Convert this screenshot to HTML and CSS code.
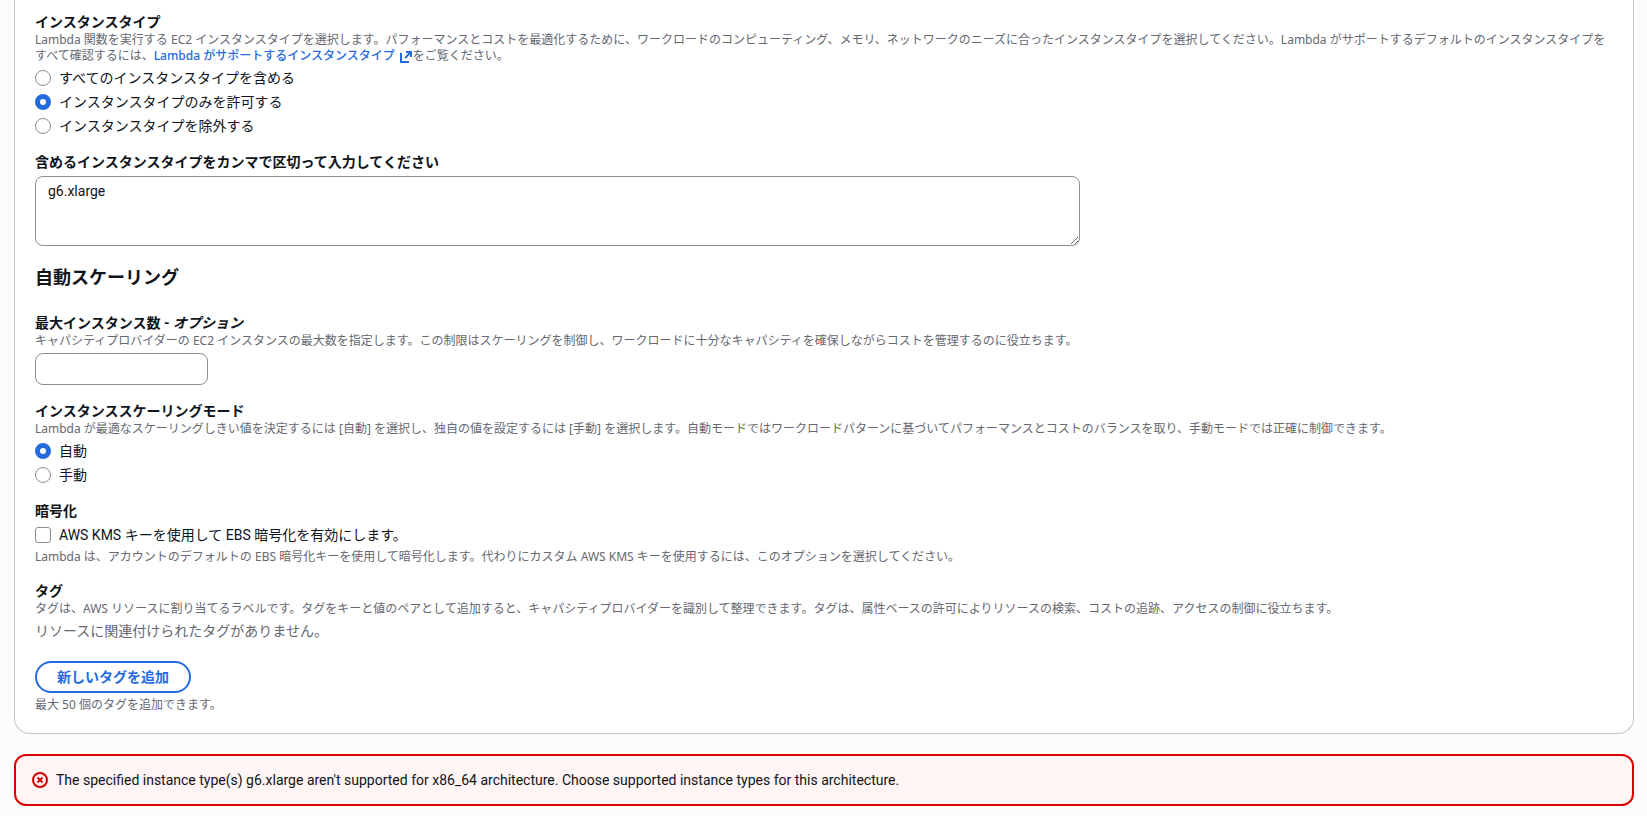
FILE: index.html
```html
<!DOCTYPE html>
<html lang="ja">
<head>
<meta charset="utf-8">
<title>キャパシティプロバイダーを作成</title>
<link rel="stylesheet" href="styles.css">
</head>
<body>
<main class="page">
  <form class="container">
    <fieldset class="field">
      <legend class="label">インスタンスタイプ</legend>
      <p class="description">Lambda 関数を実行する EC2 インスタンスタイプを選択します。パフォーマンスとコストを最適化するために、ワークロードのコンピューティング、メモリ、ネットワークのニーズに合ったインスタンスタイプを選択してください。Lambda がサポートするデフォルトのインスタンスタイプをすべて確認するには、<a class="link" href="#">Lambda がサポートするインスタンスタイプ <svg class="link-icon" viewBox="0 0 14 14" aria-hidden="true"><path d="M2 3v9h8M7 2h5v5M12 2 6 8"/></svg></a>をご覧ください。</p>
      <div class="options">
        <label class="option"><input class="radio" type="radio" name="types">すべてのインスタンスタイプを含める</label>
        <label class="option"><input class="radio" type="radio" name="types" checked>インスタンスタイプのみを許可する</label>
        <label class="option"><input class="radio" type="radio" name="types">インスタンスタイプを除外する</label>
      </div>
    </fieldset>

    <div class="field">
      <label class="label" for="included">含めるインスタンスタイプをカンマで区切って入力してください</label>
      <textarea class="textarea" id="included" rows="3">g6.xlarge</textarea>
    </div>

    <h2 class="heading">自動スケーリング</h2>

    <div class="field">
      <label class="label" for="max">最大インスタンス数 - <em>オプション</em></label>
      <p class="description">キャパシティプロバイダーの EC2 インスタンスの最大数を指定します。この制限はスケーリングを制御し、ワークロードに十分なキャパシティを確保しながらコストを管理するのに役立ちます。</p>
      <input class="input" id="max" type="text">
    </div>

    <fieldset class="field">
      <legend class="label">インスタンススケーリングモード</legend>
      <p class="description">Lambda が最適なスケーリングしきい値を決定するには [自動] を選択し、独自の値を設定するには [手動] を選択します。自動モードではワークロードパターンに基づいてパフォーマンスとコストのバランスを取り、手動モードでは正確に制御できます。</p>
      <div class="options">
        <label class="option"><input class="radio" type="radio" name="mode" checked>自動</label>
        <label class="option"><input class="radio" type="radio" name="mode">手動</label>
      </div>
    </fieldset>

    <fieldset class="field">
      <legend class="label">暗号化</legend>
      <div class="options">
        <label class="option"><input class="checkbox" type="checkbox">AWS KMS キーを使用して EBS 暗号化を有効にします。</label>
        <p class="description">Lambda は、アカウントのデフォルトの EBS 暗号化キーを使用して暗号化します。代わりにカスタム AWS KMS キーを使用するには、このオプションを選択してください。</p>
      </div>
    </fieldset>

    <section class="field">
      <h3 class="label">タグ</h3>
      <p class="description">タグは、AWS リソースに割り当てるラベルです。タグをキーと値のペアとして追加すると、キャパシティプロバイダーを識別して整理できます。タグは、属性ベースの許可によりリソースの検索、コストの追跡、アクセスの制御に役立ちます。</p>
      <p class="empty">リソースに関連付けられたタグがありません。</p>
      <button class="button" type="button">新しいタグを追加</button>
      <p class="description hint">最大 50 個のタグを追加できます。</p>
    </section>
  </form>

  <div class="alert" role="alert">
    <svg class="alert-icon" viewBox="0 0 16 16" aria-hidden="true"><circle cx="8" cy="8" r="7"/><path d="m5.500 5.500 5 5M10.500 5.500l-5 5"/></svg>
    <span>The specified instance type(s) g6.xlarge aren't supported for x86_64 architecture. Choose supported instance types for this architecture.</span>
  </div>
</main>
</body>
</html>
```
FILE: styles.css
```css
:root {
  --text: #0f141a;
  --muted: #656871;
  --accent: #256be0;
  --line: #8c8c94;
  --error: #db0000;
}

* {
  box-sizing: border-box;
}

body {
  margin: 0;
  background: #fcfcfd;
  color: var(--text);
  font: 14px/20px Roboto, "Noto Sans CJK JP", sans-serif;
}

.page {
  display: flex;
  flex-direction: column;
  gap: 20px;
  padding: 0 13px 10px 14px;
}

.container {
  display: flex;
  flex-direction: column;
  gap: 16px;
  padding: 12px 20px 20px;
  border: 1px solid #c6c6cd;
  border-top: 0;
  border-radius: 0 0 16px 16px;
  background: #fff;
}

.field {
  min-width: 0;
  margin: 0;
  padding: 0;
  border: 0;
}

.label {
  display: block;
  margin: 0;
  padding: 0;
  font-size: 14px;
  font-weight: 700;
  line-height: 20px;
}

.description {
  margin: 0;
  color: var(--muted);
  font-family: "Noto Sans", "Noto Sans CJK JP", sans-serif;
  font-size: 12px;
  line-height: 16px;
}

.link {
  color: var(--accent);
  font-weight: 500;
  text-decoration: none;
}

.link-icon {
  width: 14px;
  height: 14px;
  margin-left: 1px;
  vertical-align: -4px;
  fill: none;
  stroke: currentColor;
  stroke-width: 2;
}

.options {
  display: flex;
  flex-direction: column;
  gap: 4px;
  padding-top: 4px;
}

.option {
  display: flex;
  align-items: center;
  gap: 8px;
}

.radio,
.checkbox {
  appearance: none;
  flex: none;
  width: 16px;
  height: 16px;
  margin: 0;
  border: 1px solid var(--line);
  background: #fff;
}

.radio {
  border-radius: 50%;
}

.radio:checked {
  border: 5px solid var(--accent);
}

.checkbox {
  border-radius: 3px;
}

.textarea,
.input {
  display: block;
  margin: 4px 0 0;
  border: 1px solid var(--line);
  border-radius: 8px;
  background: #fff;
  color: inherit;
  font: inherit;
}

.textarea {
  width: calc(66.666% - 7px);
  height: 70px;
  padding: 4px 12px;
}

.input {
  width: 173px;
  height: 32px;
  padding: 4px 12px;
}

.heading {
  margin: 4px 0 7px;
  font-size: 18px;
  font-weight: 700;
  line-height: 24px;
}

.empty {
  margin: 4px 0 20px;
  color: var(--muted);
}

.button {
  display: block;
  height: 32px;
  padding: 0 20px;
  border: 2px solid var(--accent);
  border-radius: 16px;
  background: #fff;
  color: var(--accent);
  font: inherit;
  font-weight: 700;
}

.hint {
  margin-top: 4px;
}

.alert {
  display: flex;
  align-items: center;
  gap: 8px;
  padding: 14px 16px;
  border: 2px solid var(--error);
  border-radius: 12px;
  background: #fff5f4;
}

.alert-icon {
  flex: none;
  width: 16px;
  height: 16px;
  fill: none;
  stroke: var(--error);
  stroke-width: 2;
}
```
